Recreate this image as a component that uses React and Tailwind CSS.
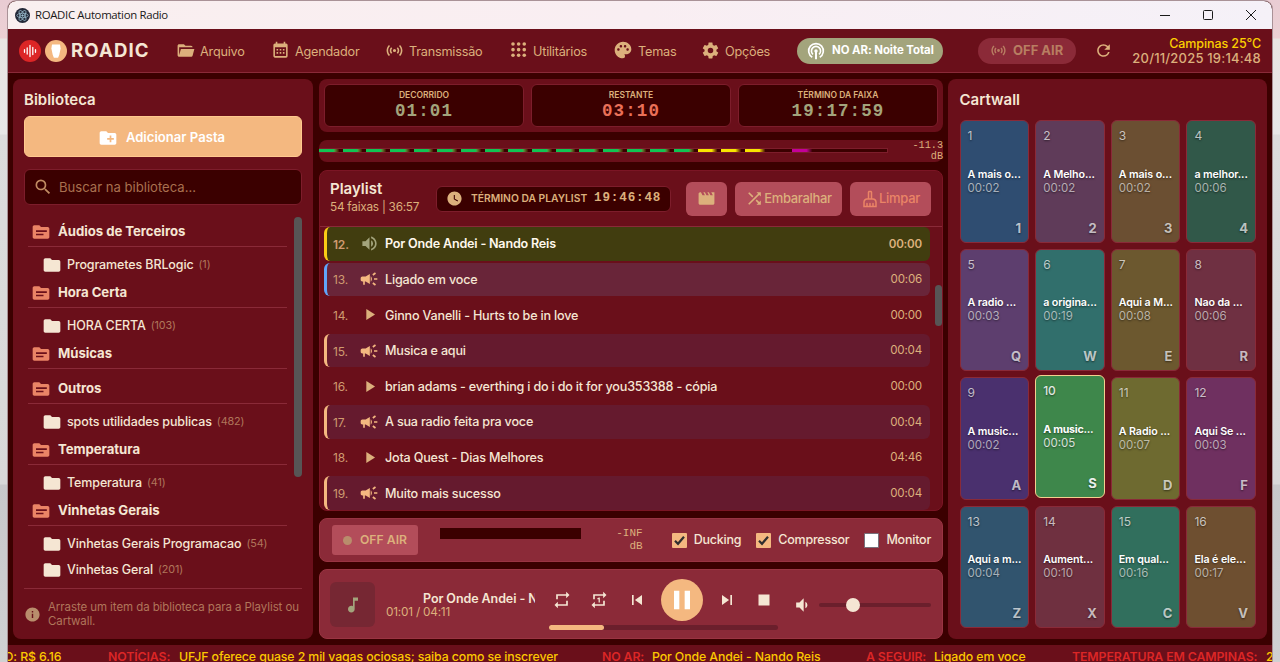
import {
  MdCampaign,
  MdCreateNewFolder,
  MdFolder,
  MdInfo,
  MdMovie,
  MdMusicNote,
  MdOutlineCleaningServices,
  MdPalette,
  MdPause,
  MdPlayArrow,
  MdRefresh,
  MdRepeat,
  MdRepeatOne,
  MdSearch,
  MdShuffle,
  MdSkipNext,
  MdSkipPrevious,
  MdStop,
  MdVolumeDown,
  MdVolumeUp,
  MdWatchLater,
} from "react-icons/md";

const Icon = ({ d, className = "size-5" }) => (
  <svg viewBox="0 0 24 24" fill="currentColor" fillRule="evenodd" className={`shrink-0 ${className}`}>
    <path d={d} />
  </svg>
);

const paths = {
  folderOpen:
    "M19,20H4C2.89,20 2,19.1 2,18V6C2,4.89 2.89,4 4,4H10L12,6H19A2,2 0 0,1 21,8H21L4,8V18L6.14,10H23.21L20.93,18.5C20.7,19.37 19.92,20 19,20Z",
  calendar:
    "M9,10V12H7V10H9M13,10V12H11V10H13M17,10V12H15V10H17M19,3A2,2 0 0,1 21,5V19A2,2 0 0,1 19,21H5C3.89,21 3,20.1 3,19V5A2,2 0 0,1 5,3H6V1H8V3H16V1H18V3H19M19,19V8H5V19H19M9,14V16H7V14H9M13,14V16H11V14H13M17,14V16H15V14H17Z",
  accessPoint:
    "M4.93,4.93C3.12,6.74 2,9.24 2,12C2,14.76 3.12,17.26 4.93,19.07L6.34,17.66C4.89,16.22 4,14.22 4,12C4,9.79 4.89,7.78 6.34,6.34L4.93,4.93M19.07,4.93L17.66,6.34C19.11,7.78 20,9.79 20,12C20,14.22 19.11,16.22 17.66,17.66L19.07,19.07C20.88,17.26 22,14.76 22,12C22,9.24 20.88,6.74 19.07,4.93M7.76,7.76C6.67,8.85 6,10.35 6,12C6,13.65 6.67,15.15 7.76,16.24L9.17,14.83C8.45,14.11 8,13.11 8,12C8,10.89 8.45,9.89 9.17,9.17L7.76,7.76M16.24,7.76L14.83,9.17C15.55,9.89 16,10.89 16,12C16,13.11 15.55,14.11 14.83,14.83L16.24,16.24C17.33,15.15 18,13.65 18,12C18,10.35 17.33,8.85 16.24,7.76M12,10A2,2 0 0,0 10,12A2,2 0 0,0 12,14A2,2 0 0,0 14,12A2,2 0 0,0 12,10Z",
  cog: "M12,15.5A3.5,3.5 0 0,1 8.5,12A3.5,3.5 0 0,1 12,8.5A3.5,3.5 0 0,1 15.5,12A3.5,3.5 0 0,1 12,15.5M19.43,12.97C19.47,12.65 19.5,12.33 19.5,12C19.5,11.67 19.47,11.34 19.43,11L21.54,9.37C21.73,9.22 21.78,8.95 21.66,8.73L19.66,5.27C19.54,5.05 19.27,4.96 19.05,5.05L16.56,6.05C16.04,5.66 15.5,5.32 14.87,5.07L14.5,2.42C14.46,2.18 14.25,2 14,2H10C9.75,2 9.54,2.18 9.5,2.42L9.13,5.07C8.5,5.32 7.96,5.66 7.44,6.05L4.95,5.05C4.73,4.96 4.46,5.05 4.34,5.27L2.34,8.73C2.21,8.95 2.27,9.22 2.46,9.37L4.57,11C4.53,11.34 4.5,11.67 4.5,12C4.5,12.33 4.53,12.65 4.57,12.97L2.46,14.63C2.27,14.78 2.21,15.05 2.34,15.27L4.34,18.73C4.46,18.95 4.73,19.03 4.95,18.95L7.44,17.94C7.96,18.34 8.5,18.68 9.13,18.93L9.5,21.58C9.54,21.82 9.75,22 10,22H14C14.25,22 14.46,21.82 14.5,21.58L14.87,18.93C15.5,18.67 16.04,18.34 16.56,17.94L19.05,18.95C19.27,19.03 19.54,18.95 19.66,18.73L21.66,15.27C21.78,15.05 21.73,14.78 21.54,14.63L19.43,12.97Z",
  folderText:
    "M10 4H4C2.9 4 2 4.9 2 6V18C2 19.1 2.9 20 4 20H20C21.1 20 22 19.1 22 18V8C22 6.9 21.1 6 20 6H12L10 4ZM6 10H19V12H6ZM6 14H15V16H6Z",
};

const DotsIcon = () => (
  <svg viewBox="0 0 24 24" fill="currentColor" className="size-[18px] shrink-0">
    {[4, 11.5, 19].map((y) => [4, 11.5, 19].map((x) => <circle key={`${x}-${y}`} cx={x} cy={y} r="2.4" />))}
  </svg>
);

const PodcastIcon = () => (
  <svg viewBox="0 0 24 24" fill="none" stroke="currentColor" strokeWidth="2.2" className="size-[18px] shrink-0">
    <path d="M7 20.3a9.8 9.8 0 1 1 10 0" />
    <path d="M8 16.6a6.1 6.1 0 1 1 8 0" />
    <circle cx="12" cy="12" r="2.3" fill="currentColor" stroke="none" />
    <path d="M12 12v11" strokeWidth="2.6" />
  </svg>
);

const menu = [
  { label: "Arquivo", width: "w-[95px]", icon: <Icon d={paths.folderOpen} className="size-[19px]" /> },
  { label: "Agendador", width: "w-[114px]", icon: <Icon d={paths.calendar} className="size-[19px]" /> },
  { label: "Transmissão", width: "w-[125px]", icon: <Icon d={paths.accessPoint} className="size-[19px]" /> },
  { label: "Utilitários", width: "w-[103px]", icon: <DotsIcon /> },
  { label: "Temas", width: "w-[88px]", icon: <MdPalette className="size-[20px] shrink-0" /> },
  { label: "Opções", width: "w-[96px]", icon: <Icon d={paths.cog} className="size-[19px]" /> },
];

const library = [
  { name: "Áudios de Terceiros", items: [["Programetes BRLogic", 1]] },
  { name: "Hora Certa", items: [["HORA CERTA", 103]] },
  { name: "Músicas", items: [] },
  { name: "Outros", items: [["spots utilidades publicas", 482]] },
  { name: "Temperatura", items: [["Temperatura", 41]] },
  { name: "Vinhetas Gerais", items: [["Vinhetas Gerais Programacao", 54], ["Vinhetas Geral", 201]] },
];

const tracks = [
  { n: 12, title: "Por Onde Andei - Nando Reis", time: "00:00", kind: "playing" },
  { n: 13, title: "Ligado em voce", time: "00:06", kind: "next" },
  { n: 14, title: "Ginno Vanelli - Hurts to be in love", time: "00:00", kind: "song" },
  { n: 15, title: "Musica e aqui", time: "00:04", kind: "spot" },
  { n: 16, title: "brian adams - everthing i do i do it for you353388 - cópia", time: "00:00", kind: "song" },
  { n: 17, title: "A sua radio feita pra voce", time: "00:04", kind: "spot" },
  { n: 18, title: "Jota Quest - Dias Melhores", time: "04:46", kind: "song" },
  { n: 19, title: "Muito mais sucesso", time: "00:04", kind: "spot" },
];

const rowStyles = {
  playing: "bg-[#413d0f] border-[#facc15]",
  next: "bg-[#692539] border-[#60a5fa]",
  song: "border-transparent",
  spot: "bg-[#651a2e] border-[#f4b880]",
};

const carts = [
  { title: "A mais o...", time: "00:02", hotkey: "1", color: "bg-[#2f4d71]" },
  { title: "A Melho...", time: "00:02", hotkey: "2", color: "bg-[#5f3b59]" },
  { title: "A mais o...", time: "00:02", hotkey: "3", color: "bg-[#6b4f32]" },
  { title: "a melhor...", time: "00:06", hotkey: "4", color: "bg-[#315849]" },
  { title: "A radio ...", time: "00:03", hotkey: "Q", color: "bg-[#5d3e6e]" },
  { title: "a origina...", time: "00:19", hotkey: "W", color: "bg-[#316f6c]" },
  { title: "Aqui a M...", time: "00:08", hotkey: "E", color: "bg-[#6c582f]" },
  { title: "Nao da ...", time: "00:06", hotkey: "R", color: "bg-[#6f3042]" },
  { title: "A music...", time: "00:02", hotkey: "A", color: "bg-[#4a306e]" },
  { title: "A music...", time: "00:05", hotkey: "S", color: "bg-[#3e874b]", active: true },
  { title: "A Radio ...", time: "00:07", hotkey: "D", color: "bg-[#6e6a30]" },
  { title: "Aqui Se ...", time: "00:03", hotkey: "F", color: "bg-[#6f3060]" },
  { title: "Aqui a m...", time: "00:04", hotkey: "Z", color: "bg-[#31546e]" },
  { title: "Aument...", time: "00:10", hotkey: "X", color: "bg-[#6f3040]" },
  { title: "Em qual...", time: "00:16", hotkey: "C", color: "bg-[#316f5d]" },
  { title: "Ela é ele...", time: "00:17", hotkey: "V", color: "bg-[#6e4f30]" },
];

const ledColor = (i) => {
  if (i < 16) return "from-[#10c452]";
  if (i < 19) return "from-[#f8e400]";
  if (i === 20) return "from-[#c40098]";
  return "from-[#3b0000]";
};

const TitleBar = () => (
  <div className="flex h-7 shrink-0 items-center rounded-t-lg bg-gradient-to-r from-[#f9efef] via-[#f9eef2] to-[#f5f1f8] pl-[7px] pr-[16px]">
    <svg viewBox="0 0 24 24" fill="none" stroke="#9fc3d4" strokeWidth="1.2" className="size-[15px]">
      <circle cx="12" cy="12" r="12" fill="#242938" stroke="none" />
      <ellipse cx="12" cy="12" rx="9" ry="3.6" />
      <ellipse cx="12" cy="12" rx="9" ry="3.6" transform="rotate(60 12 12)" />
      <ellipse cx="12" cy="12" rx="9" ry="3.6" transform="rotate(120 12 12)" />
      <circle cx="12" cy="12" r="1.3" fill="#9fc3d4" />
    </svg>
    <span className="ml-[5px] font-['Open_Sans',sans-serif] text-[11.4px] tracking-[-0.33px] text-[#191919]">ROADIC Automation Radio</span>
    <div className="ml-auto flex items-center gap-[33px] text-[#1a1a1a]">
      <svg viewBox="0 0 10 10" className="size-[10px]" stroke="currentColor"><path d="M0 5.5H10" /></svg>
      <svg viewBox="0 0 10 10" className="size-[10px]" stroke="currentColor" fill="none"><rect x=".5" y=".5" width="9" height="9" rx="1" /></svg>
      <svg viewBox="0 0 10 10" className="size-[10px]" stroke="currentColor"><path d="M0 0L10 10M10 0L0 10" /></svg>
    </div>
  </div>
);

const Header = () => (
  <header className="flex h-11 shrink-0 items-center border-b border-[#8a2a38] bg-[#6a0f1a] pl-[11px] pr-[11px] text-[#dcb07c]">
    <svg viewBox="0 0 22 22" className="size-[22px] shrink-0">
      <circle cx="11" cy="11" r="11" fill="#dc2626" />
      <path d="M5.5 9.7v2.6M8.2 8v6M11 5.5v11M13.8 7.5v7M16.5 9.7v2.6" stroke="#fff" strokeWidth="1.3" strokeLinecap="round" />
    </svg>
    <svg viewBox="0 0 22 22" className="ml-1 size-[22px] shrink-0">
      <circle cx="11" cy="11" r="11" fill="#f4b880" />
      <path d="M7 4.5h8l.6 4-1.3 6.2-1.2 3H8.9l-1.2-3L6.4 8.5z" fill="#fff" />
    </svg>
    <h1 className="ml-[4px] w-[105px] shrink-0 text-[18.6px] font-bold tracking-[1.1px] text-[#f5e6d3]">ROADIC</h1>
    <nav className="flex">
      {menu.map((item) => (
        <button key={item.label} className={`flex items-center gap-[5px] text-[12.7px] tracking-[-0.22px] ${item.width}`}>
          {item.icon}
          <span className="pt-[2px]">{item.label}</span>
        </button>
      ))}
    </nav>
    <div className="flex h-[26px] w-[146px] shrink-0 items-center gap-[7px] rounded-full bg-[#a3a47c] pl-[10px] text-[11.4px] font-bold tracking-[-0.05px] whitespace-nowrap text-white">
      <PodcastIcon />
      <span className="pt-px">NO AR: Noite Total</span>
    </div>
    <div className="ml-[35px] flex h-[26px] w-[98px] shrink-0 items-center gap-[6px] rounded-full bg-[#8b2a38] pl-[12px] text-[13px] font-bold whitespace-nowrap text-[#b87e62]">
      <Icon d={paths.accessPoint} className="size-[17px]" />
      <span className="pt-px">OFF AIR</span>
    </div>
    <MdRefresh className="ml-[18px] size-[19px] shrink-0" />
    <div className="ml-auto text-right leading-[15px] font-medium whitespace-nowrap">
      <div className="text-[12.5px] tracking-[-0.1px] text-[#fcd000]">Campinas 25°C</div>
      <div className="text-[13px] tracking-[0.2px]">20/11/2025 19:14:48</div>
    </div>
  </header>
);

const Library = () => (
  <aside className="flex w-[300px] shrink-0 flex-col rounded-lg bg-[#6a0f1a] px-[11px] pt-[11px]">
    <h2 className="h-[26px] text-[15px] leading-5 font-semibold text-[#f5e6d3]">Biblioteca</h2>
    <button className="flex h-[41px] shrink-0 items-center justify-center gap-2 rounded-md border border-[#ffc98f] bg-[#f4b880] pt-[2px] pr-[3px] text-[13.1px] font-semibold text-white">
      <MdCreateNewFolder className="size-5" />
      Adicionar Pasta
    </button>
    <div className="mt-3 flex h-9 shrink-0 items-center gap-[6px] rounded-md border border-[#7d1d2b] bg-[#3b0000] pl-[8px] text-[13.1px] text-[#a9704f]">
      <MdSearch className="size-5 text-[#c08b62]" />
      <span className="pt-[2px]">Buscar na biblioteca...</span>
    </div>
    <div className="mt-3 flex h-[371px] shrink-0 justify-between">
      <div className="w-[263px] pl-1">
        {library.map((group) => (
          <div key={group.name}>
            <div className="mb-[5px] flex h-[30px] items-center gap-[7px] border-b border-[#8a2a38] pt-px pl-[3px] text-[13.2px] font-bold tracking-[-0.05px] text-[#f5e6d3]">
              <Icon d={paths.folderText} className="size-5 text-[#ea8466]" />
              {group.name}
            </div>
            {group.items.map(([name, count]) => (
              <div key={name} className="flex h-[26px] items-center gap-[5px] pl-[14px] text-[12.5px] font-medium tracking-[-0.12px] whitespace-nowrap text-[#f5e6d3]">
                <MdFolder className="size-5 shrink-0" />
                {name}
                <span className="text-[10.8px] font-normal text-[#b0765a]">({count})</span>
              </div>
            ))}
          </div>
        ))}
      </div>
      <div className="h-[260px] w-2 rounded-full bg-[#575555]" />
    </div>
    <div className="flex h-[51px] items-center gap-[7px] border-t border-[#8a2a38] text-[11.5px] leading-[14px] tracking-[-0.08px] text-[#b0765a]">
      <MdInfo className="size-[17px] shrink-0 text-[#b98d6c]" />
      <p>
        <span className="whitespace-nowrap">Arraste um item da biblioteca para a Playlist ou</span> Cartwall.
      </p>
    </div>
  </aside>
);

const Timer = ({ label, value, color }) => (
  <div className="flex flex-1 flex-col items-center rounded-md border border-[#7d1d2b] bg-[#3b0000] pt-[4px]">
    <span className="text-[8.5px] leading-3 font-semibold text-[#dcb07c]">{label}</span>
    <span className={`font-['Liberation_Mono',monospace] text-[17.5px] leading-5 font-bold tracking-[1.1px] ${color}`}>{value}</span>
  </div>
);

const TrackIcon = ({ kind }) => {
  if (kind === "playing") return <MdVolumeUp className="size-[19px] text-[#a3a47c]" />;
  if (kind === "song") return <MdPlayArrow className="size-[19px] text-[#dcb07c]" />;
  return <MdCampaign className="size-5 text-[#f4b880]" />;
};

const Playlist = () => (
  <section className="mt-2 flex h-[341px] flex-col overflow-hidden rounded-lg border border-[#7b1524] bg-[#6a0f1a]">
    <div className="flex h-14 shrink-0 items-center border-b border-[#8a2a38] pl-[10px]">
      <div className="w-[106px] pb-[3px]">
        <h2 className="text-[15px] leading-5 font-semibold text-[#f5e6d3]">Playlist</h2>
        <p className="text-[11.8px] leading-4 tracking-[-0.25px] text-[#dcb07c]">54 faixas | 36:57</p>
      </div>
      <div className="flex h-[26px] w-[235px] items-center rounded-md border border-[#7d1d2b] bg-[#3b0000] pl-[9px] text-[#dcb07c]">
        <MdWatchLater className="size-[17px] shrink-0" />
        <span className="ml-[8px] w-[117px] text-[10.3px] font-semibold whitespace-nowrap">TÉRMINO DA PLAYLIST</span>
        <span className="ml-[6px] pb-px font-['Liberation_Mono',monospace] text-[12.6px] font-bold tracking-[0.85px] text-[#dcb07c]">19:46:48</span>
      </div>
      <button className="ml-[15px] flex h-[34px] w-[41px] items-center justify-center rounded-md bg-[#b34d5a] text-[#dcb07c]">
        <MdMovie className="size-[19px]" />
      </button>
      <button className="ml-2 flex h-[34px] w-[107px] items-center justify-center rounded-md bg-[#b34d5a] text-[13px] font-medium tracking-[-0.35px] text-[#dcb07c]">
        <MdShuffle className="size-[19px] shrink-0" />
        Embaralhar
      </button>
      <button className="ml-2 flex h-[34px] w-[81px] items-center justify-center rounded-md bg-[#b34d5a] text-[13px] font-medium tracking-[-0.25px] text-[#ea8466]">
        <MdOutlineCleaningServices className="size-[18px] shrink-0" />
        Limpar
      </button>
    </div>
    <div className="flex min-h-0 flex-1">
      <ul className="ml-1 flex w-[606px] shrink-0 flex-col gap-[2px]">
        {tracks.map((track) => (
          <li
            key={track.n}
            className={`flex h-[33.6px] shrink-0 items-center rounded-md border-l-[3px] pr-[8px] pl-[6px] text-[12.6px] tracking-[-0.2px] ${rowStyles[track.kind]}`}
          >
            <span className={`w-[26px] pt-[2px] text-[12px] text-[#cf9a70] ${track.kind === "playing" ? "font-semibold" : ""}`}>{track.n}.</span>
            <span className="flex w-[26px] justify-center pr-[6px]">
              <TrackIcon kind={track.kind} />
            </span>
            <span className={`pt-[2px] ${track.kind === "playing" ? "font-semibold text-[#fff8ec]" : "font-medium text-[#f5e6d3]"}`}>{track.title}</span>
            <span className={`ml-auto pt-px text-[11.6px] text-[#dcb07c] ${track.kind === "playing" ? "font-semibold" : ""}`}>{track.time}</span>
          </li>
        ))}
      </ul>
      <div className="mt-[58px] ml-[5px] h-[41px] w-2 rounded-full bg-[#575555]" />
    </div>
  </section>
);

const Check = ({ label, checked }) => (
  <label className="flex items-center gap-[7px] text-[12.5px] font-medium tracking-[-0.22px] whitespace-nowrap text-[#f5e6d3]">
    <span className={`flex size-[15px] items-center justify-center rounded-[1px] ${checked ? "bg-[#f4b880]" : "border border-[#77717b] bg-white"}`}>
      {checked && (
        <svg viewBox="0 0 15 15" fill="none" stroke="#2f2f2f" strokeWidth="2.2" className="size-[15px]">
          <path d="M3 7.8L6 10.8L12 3.8" />
        </svg>
      )}
    </span>
    <span className="pt-px">{label}</span>
  </label>
);

const MicPanel = () => (
  <section className="mt-[7px] flex h-11 shrink-0 items-center rounded-lg border border-[#9a3442] bg-[#8b2a38] pr-[11px] pl-3">
    <button className="flex h-[30px] w-[86px] items-center gap-2 rounded-[3px] bg-[#b34d5a] pl-[11px] text-[12.2px] font-semibold whitespace-nowrap text-[#dcb07c]">
      <span className="size-[9px] rounded-full bg-[#b98d6c]" />
      <span className="pt-px">OFF AIR</span>
    </button>
    <div className="mb-[13px] ml-[22px] h-[11px] w-[141px] bg-[#3b0000]" />
    <div className="ml-auto w-10 text-right font-['Liberation_Mono',monospace] text-[11px] leading-[13px] text-[#dcb07c]">
      -INF
      <br />
      dB
    </div>
    <div className="ml-[29px] flex gap-[15px]">
      <Check label="Ducking" checked />
      <Check label="Compressor" checked />
      <Check label="Monitor" />
    </div>
  </section>
);

const Player = () => (
  <section className="mt-[7px] flex h-[70px] shrink-0 rounded-lg border border-[#9a3442] bg-[#8b2a38] pl-[10px] text-[#f5e6d3]">
    <div className="mt-3 flex size-[45px] items-center justify-center rounded-md bg-[#762733] text-[#a3a47c]">
      <MdMusicNote className="size-5" />
    </div>
    <div className="mt-[21px] ml-[11px] w-[149px] overflow-hidden whitespace-nowrap">
      <div className="pl-[37px] text-[12.5px] leading-4 font-semibold tracking-[-0.08px]">Por Onde Andei - Nando Reis</div>
      <div className="text-[11.8px] leading-[11px] tracking-[-0.22px] text-[#dcb07c]">01:01 / 04:11</div>
    </div>
    <div className="ml-[14px] w-[229px]">
      <div className="mt-[9px] flex h-[42px] items-center">
        <MdRepeat className="ml-[3px] size-5" />
        <MdRepeatOne className="ml-[17px] size-5" />
        <MdSkipPrevious className="ml-[18px] size-5" />
        <button className="ml-[14px] flex size-[42px] shrink-0 items-center justify-center rounded-full bg-[#f4b880] text-white">
          <MdPause className="size-[32px]" />
        </button>
        <MdSkipNext className="ml-[14px] size-5" />
        <MdStop className="ml-[16px] size-[22px]" />
      </div>
      <div className="mt-[4px] h-[5px] rounded-full bg-[#6b1f2c]">
        <div className="h-full rounded-full bg-[#f4b880]" style={{ width: "24%" }} />
      </div>
    </div>
    <MdVolumeDown className="mt-[25px] ml-[14px] size-5 shrink-0" />
    <div className="relative mt-[33px] ml-[7px] h-1 w-[112px] rounded-full bg-[#6b1f2c]">
      <span className="absolute -top-[5px] left-[27px] size-[14px] rounded-full bg-[#f5e6d3]" />
    </div>
  </section>
);

const Cartwall = () => (
  <aside className="w-[319px] shrink-0 rounded-lg bg-[#6a0f1a] pt-[11px] pr-[11px] pl-[11.5px]">
    <h2 className="h-[30px] text-[15px] leading-5 font-semibold text-[#f5e6d3]">Cartwall</h2>
    <div className="grid h-[508px] w-[296.5px] grid-cols-4 grid-rows-4 gap-[6px]">
      {carts.map((cart, i) => (
        <div
          key={cart.hotkey}
          className={`flex min-w-0 flex-col rounded-md border px-[7px] pt-[7px] pb-[5px] text-white [text-shadow:0_1px_2px_rgba(0,0,0,0.5)] ${cart.color} ${
            cart.active ? "-translate-y-[2px] border-[#f5d08f]" : "border-[#8a2a38]"
          }`}
        >
          <span className={`text-[12px] leading-4 ${cart.active ? "font-medium text-white/85" : "text-white/70"}`}>{i + 1}</span>
          <div className="my-auto whitespace-nowrap">
            <div className={`text-[10.7px] leading-[14px] ${cart.active ? "font-bold tracking-[-0.25px]" : "font-semibold tracking-[-0.1px]"}`}>{cart.title}</div>
            <div className={`text-[11.5px] leading-[13px] ${cart.active ? "text-white/80" : "text-white/60"}`}>{cart.time}</div>
          </div>
          <span className={`text-right text-[13px] leading-[18px] font-bold ${cart.active ? "text-white/90" : "text-white/70"}`}>{cart.hotkey}</span>
        </div>
      ))}
    </div>
  </aside>
);

const Ticker = () => (
  <footer className="mt-[6px] flex h-[17px] shrink-0 overflow-hidden bg-[#6a0f1a] pt-[3px] text-[12.3px] leading-[18px] font-medium tracking-[-0.1px] whitespace-nowrap text-[#fcc800]">
    <span className="-ml-[4px] w-[104px] shrink-0">O: R$ 6.16</span>
    <span className="w-[71px] shrink-0 font-semibold text-[#dc2626]">NOTÍCIAS:</span>
    <span className="w-[423px] shrink-0">UFJF oferece quase 2 mil vagas ociosas; saiba como se inscrever</span>
    <span className="w-[50px] shrink-0 font-semibold text-[#dc2626]">NO AR:</span>
    <span className="w-[214px] shrink-0">Por Onde Andei - Nando Reis</span>
    <span className="w-[68px] shrink-0 font-semibold text-[#dc2626]">A SEGUIR:</span>
    <span className="w-[138px] shrink-0">Ligado em voce</span>
    <span className="w-[194px] shrink-0 font-semibold text-[#dc2626]">TEMPERATURA EM CAMPINAS:</span>
    <span>25°C</span>
  </footer>
);

const App = () => {
  return (
    <div className="h-[662px] w-[1280px] overflow-hidden bg-[linear-gradient(#e9ccd3_0,#ecd0d4_38px,#e9e5e3_39px,#e7e7e7_134px,#dcdcdc_135px,#d8d8d8_484px,#c8c8ca_485px,#d0d0d2)] pt-px pr-[8px] pl-2 font-['Inter',sans-serif]">
      <div className="flex h-[661px] flex-col overflow-hidden rounded-t-lg bg-[#3b0000] shadow-[0_0_0_1px_#a99297]">
        <TitleBar />
        <Header />
        <main className="mt-[6px] flex h-[560px] shrink-0 pl-[5px]">
          <Library />
          <div className="mr-[5px] ml-[6px] flex w-[624px] shrink-0 flex-col">
            <section className="flex h-[53px] shrink-0 gap-[7px] rounded-lg bg-[#6a0f1a] p-[5px]">
              <Timer label="DECORRIDO" value="01:01" color="text-[#a3a47c]" />
              <Timer label="RESTANTE" value="03:10" color="text-[#ea7058]" />
              <Timer label="TÉRMINO DA FAIXA" value="19:17:59" color="text-[#a3a47c]" />
            </section>
            <section className="mt-2 flex h-[22px] shrink-0 items-center rounded-lg bg-[#6a0f1a]">
              <div className="mb-px flex h-[5px] w-[569px] border-y border-r border-[#7d1d2b] bg-[#3b0000]">
                {Array.from({ length: 24 }, (_, i) => (
                  <span key={i} className={`h-full flex-1 bg-gradient-to-r from-60% to-[#3b0000] to-85% ${ledColor(i)}`} />
                ))}
              </div>
              <div className="ml-auto text-right font-['Liberation_Mono',monospace] text-[10.2px] leading-[11px] text-[#dcb07c]">
                -11.3
                <br />
                dB
              </div>
            </section>
            <Playlist />
            <MicPanel />
            <Player />
          </div>
          <Cartwall />
        </main>
        <Ticker />
      </div>
    </div>
  );
};

export default App;
